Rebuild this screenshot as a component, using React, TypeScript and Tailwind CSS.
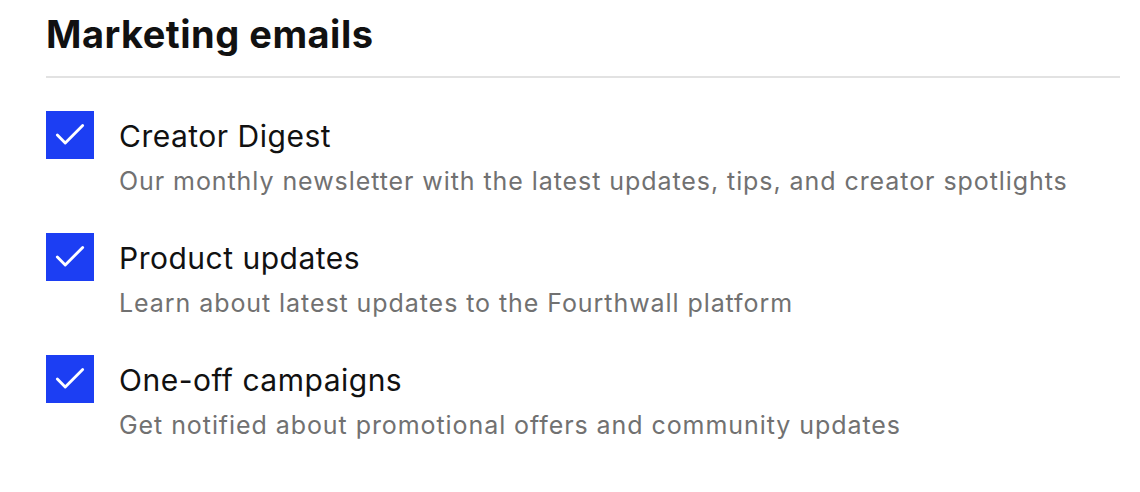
import { Check } from "lucide-react";

const items = [
  {
    title: "Creator Digest",
    description: "Our monthly newsletter with the latest updates, tips, and creator spotlights",
  },
  {
    title: "Product updates",
    description: "Learn about latest updates to the Fourthwall platform",
  },
  {
    title: "One-off campaigns",
    description: "Get notified about promotional offers and community updates",
  },
];

export default function App() {
  return (
    <div className="min-h-screen bg-white pl-[46px] pr-[20px] pt-[12px] font-['Inter',sans-serif] text-[#111]">
      <h1 className="text-[38px] font-bold leading-[44px] tracking-[0.5px]">Marketing emails</h1>
      <div className="mt-[20px] h-[2px] bg-[#e2e2e2]" />

      {/* preference rows */}
      <div className="mt-[33px] flex flex-col gap-[32px]">
        {items.map((item) => (
          <label key={item.title} className="flex gap-[25px]">
            <span className="flex h-[48px] w-[48px] shrink-0 items-center justify-center bg-[#1c3ef3]">
              <Check className="h-[38px] w-[38px] text-white" strokeWidth={1.8} />
            </span>
            <span className="flex flex-col">
              <span className="text-[30px] leading-[50px] tracking-[0.5px]">{item.title}</span>
              <span className="text-[25px] leading-[40px] tracking-[0.93px] text-[#717171]">
                {item.description}
              </span>
            </span>
          </label>
        ))}
      </div>
    </div>
  );
}
